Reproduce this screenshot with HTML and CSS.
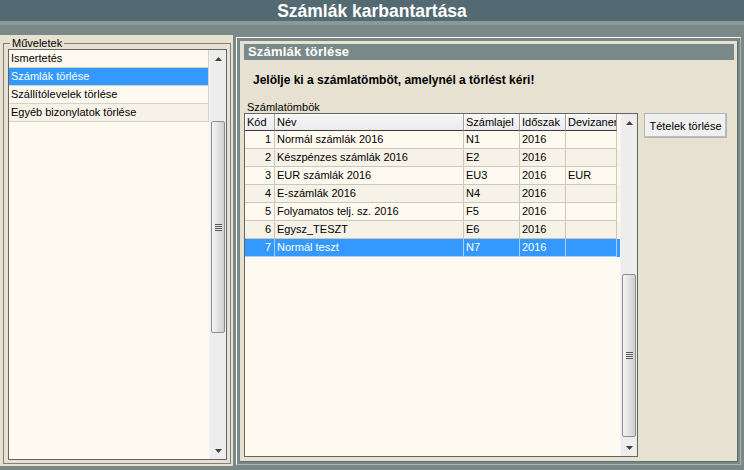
FILE: index.html
```html
<!DOCTYPE html>
<html lang="hu">
<head>
<meta charset="utf-8">
<title>Számlák karbantartása</title>
<link rel="stylesheet" href="styles.css">
</head>
<body>
<div class="app">
  <header class="titlebar">Számlák karbantartása</header>
  <div class="main">
    <aside class="left">
      <fieldset class="group">
        <legend>Műveletek</legend>
        <div class="listbox">
          <ul class="items">
            <li>Ismertetés</li>
            <li class="sel">Számlák törlése</li>
            <li>Szállítólevelek törlése</li>
            <li class="alt">Egyéb bizonylatok törlése</li>
          </ul>
          <div class="vscroll">
            <div class="sbtn"><svg width="7" height="4" viewBox="0 0 7 4"><path d="M0 4L3.5 0L7 4Z"/></svg></div>
            <div class="strack"><div class="thumb thumb-left"><span class="grip"></span></div></div>
            <div class="sbtn"><svg width="7" height="4" viewBox="0 0 7 4"><path d="M0 0H7L3.5 4Z"/></svg></div>
          </div>
        </div>
      </fieldset>
    </aside>
    <section class="right">
      <div class="rinner">
        <div class="rhead">Számlák törlése</div>
        <p class="instr">Jelölje ki a számlatömböt, amelynél a törlést kéri!</p>
        <div class="lbl">Számlatömbök</div>
        <div class="gridrow">
          <div class="grid">
            <div class="gbody">
              <div class="grow ghead">
                <div class="c">Kód</div>
                <div class="c">Név</div>
                <div class="c">Számlajel</div>
                <div class="c">Időszak</div>
                <div class="c">Devizanem</div>
              </div>
              <div class="grow">
                <div class="c num">1</div><div class="c">Normál számlák 2016</div><div class="c">N1</div><div class="c">2016</div><div class="c"></div>
              </div>
              <div class="grow alt">
                <div class="c num">2</div><div class="c">Készpénzes számlák 2016</div><div class="c">E2</div><div class="c">2016</div><div class="c"></div>
              </div>
              <div class="grow">
                <div class="c num">3</div><div class="c">EUR számlák 2016</div><div class="c">EU3</div><div class="c">2016</div><div class="c">EUR</div>
              </div>
              <div class="grow alt">
                <div class="c num">4</div><div class="c">E-számlák 2016</div><div class="c">N4</div><div class="c">2016</div><div class="c"></div>
              </div>
              <div class="grow">
                <div class="c num">5</div><div class="c">Folyamatos telj. sz. 2016</div><div class="c">F5</div><div class="c">2016</div><div class="c"></div>
              </div>
              <div class="grow alt">
                <div class="c num">6</div><div class="c">Egysz_TESZT</div><div class="c">E6</div><div class="c">2016</div><div class="c"></div>
              </div>
              <div class="grow sel">
                <div class="c num">7</div><div class="c">Normál teszt</div><div class="c">N7</div><div class="c">2016</div><div class="c"></div>
              </div>
            </div>
            <div class="vscroll">
              <div class="sbtn"><svg width="7" height="4" viewBox="0 0 7 4"><path d="M0 4L3.5 0L7 4Z"/></svg></div>
              <div class="strack"><div class="thumb thumb-grid"><span class="grip"></span></div></div>
              <div class="sbtn"><svg width="7" height="4" viewBox="0 0 7 4"><path d="M0 0H7L3.5 4Z"/></svg></div>
            </div>
          </div>
          <button class="btn" type="button">Tételek törlése</button>
        </div>
      </div>
    </section>
  </div>
</div>
</body>
</html>
```
FILE: styles.css
```css
* { box-sizing: border-box; }
html, body { margin: 0; padding: 0; }
body {
  width: 744px;
  height: 470px;
  overflow: hidden;
  background: #7a8988;
  font-family: "Liberation Sans", Arial, sans-serif;
  font-size: 11px;
  color: #000;
}
.app { width: 744px; height: 470px; }

.titlebar {
  height: 25px;
  background: #536a72;
  color: #fff;
  font-weight: bold;
  font-size: 17.5px;
  line-height: 22px;
  text-align: center;
  border-bottom: 3px solid #8a9999;
  box-shadow: inset 0 -1px 0 #8a9999;
}

.main {
  display: flex;
  align-items: flex-start;
  gap: 3px;
  padding-top: 10px;
}

/* left panel */
.left {
  width: 233px;
  height: 431px;
  background: #e6e1d1;
  padding: 2px 2px 2px 3px;
}
.group {
  margin: 0;
  min-width: 0;
  border: 1px solid #808080;
  padding: 0 3px 3px 4px;
}
.group legend {
  font-size: 11px;
  line-height: 12px;
  padding: 0 2px;
  margin-left: 2px;
}
.listbox {
  height: 411px;
  border: 1px solid #646464;
  background: #fffaf0;
  display: flex;
}
.items {
  list-style: none;
  margin: 0;
  padding: 0;
  flex: 1;
}
.items li {
  height: 18px;
  line-height: 17px;
  padding-left: 2px;
  border-bottom: 1px solid #d5d1c5;
  border-right: 1px solid #d5d1c5;
  background: #fffaf0;
}
.items li.alt { background: #f6f2e7; }
.items li.sel { background: #3399ff; color: #fff; }

/* scrollbars */
.vscroll {
  width: 17px;
  display: flex;
  flex-direction: column;
  background: #ededed;
  border-left: 1px solid #f4f4f4;
}
.sbtn {
  height: 17px;
  display: flex;
  align-items: center;
  justify-content: center;
}
.sbtn svg { fill: #404040; display: block; }
.strack { flex: 1; padding: 0 1px; }
.thumb {
  border: 1px solid #8d8d8d;
  border-radius: 2px;
  background: linear-gradient(to right, #f4f4f4 0%, #e2e2e2 50%, #cfcfcf 100%);
  display: flex;
  align-items: center;
  justify-content: center;
}
.thumb-left { margin-top: 54px; height: 212px; }
.thumb-grid { margin-top: 143px; height: 163px; }
.grip {
  width: 7px;
  height: 7px;
  background: repeating-linear-gradient(to bottom, #555 0 1px, #e8e8e8 1px 2px);
}

/* right panel */
.right {
  width: 505px;
  height: 428px;
  margin-top: 2px;
  border: 1px solid;
  border-color: #ffffff #a9b5b5 #a9b5b5 #ffffff;
  padding: 2px;
}
.rinner {
  height: 100%;
  background: #e6e1d1;
  border: 1px solid;
  border-color: #7a8988 #5f6c6c #5f6c6c #7a8988;
  padding: 3px 3px 3px 4px;
}
.rhead {
  height: 16px;
  background: #7a8a8a;
  color: #fff;
  font-weight: bold;
  font-size: 13px;
  line-height: 16px;
  padding-left: 4px;
  letter-spacing: 0.2px;
}
.instr {
  margin: 13px 0 0;
  padding-left: 9px;
  font-weight: bold;
  font-size: 12px;
  line-height: 15px;
}
.lbl {
  margin-top: 13px;
  padding-left: 3px;
  line-height: 12px;
}
.gridrow {
  display: flex;
  align-items: flex-start;
  gap: 6px;
}
.grid {
  width: 394px;
  height: 344px;
  border: 1px solid #646464;
  display: flex;
  background: #fffaf0;
}
.gbody { width: 375px; }
.grow {
  display: grid;
  grid-template-columns: 30px 189px 56px 46px 51px;
  height: 18px;
  background: #fffaf0;
}
.grow .c {
  border-right: 1px solid #cbc7bb;
  border-bottom: 1px solid #cbc7bb;
  padding-left: 2px;
  line-height: 17px;
  white-space: nowrap;
  overflow: hidden;
}
.grow .c.num { text-align: right; padding-right: 3px; }
.grow.alt { background: #f6f2e7; }
.grow.sel { background: #3399ff; color: #fff; }
.grow.sel .c { border-color: #a9cdf2; }
.ghead { height: 17px; }
.ghead .c {
  background: linear-gradient(#f7f7f7, #ebebeb);
  border-right: 1px solid #a0a0a0;
  border-bottom: 1px solid #3c3c3c;
  box-shadow: inset 1px 1px 0 #ffffff;
  line-height: 16px;
}

.btn {
  width: 83px;
  height: 25px;
  margin: 0;
  padding: 0;
  font-family: "Liberation Sans", Arial, sans-serif;
  font-size: 11px;
  color: #000;
  background: #f0f0f0;
  border: 1px solid;
  border-color: #ffffff #6f6f6f #6f6f6f #ffffff;
  box-shadow: inset -1px -1px 0 #bdbdbd, 0 0 0 0 transparent;
  outline: 1px solid #b5b5b5;
  outline-offset: -1px;
}
```
